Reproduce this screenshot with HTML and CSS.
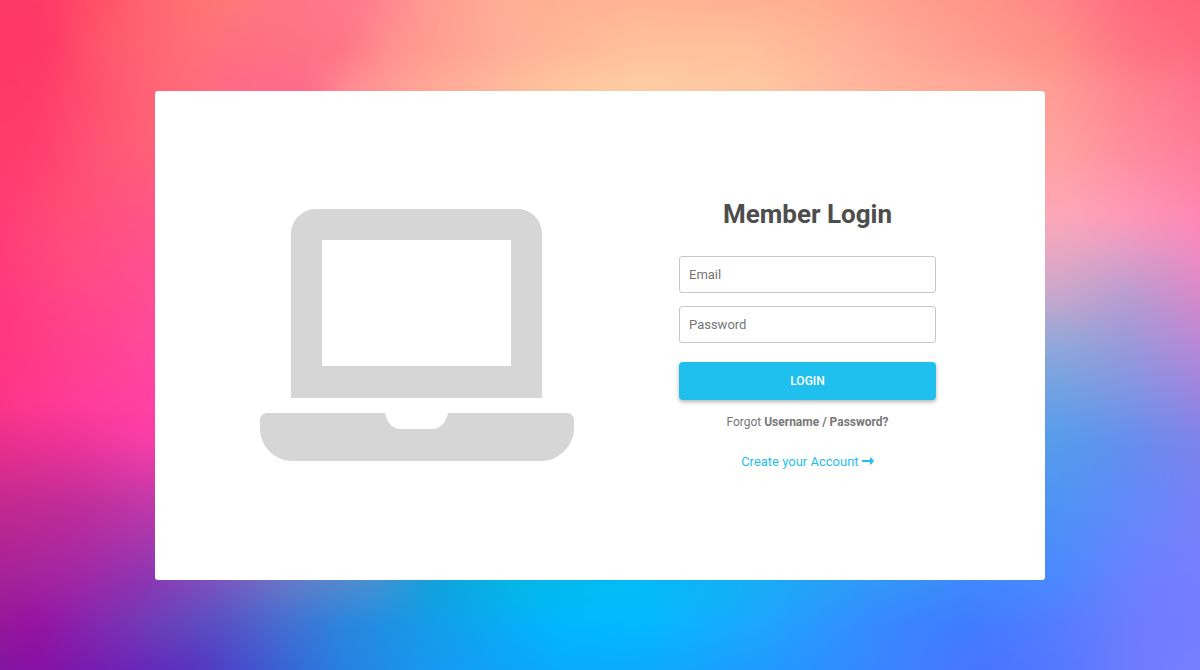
FILE: index.html
```html
<!DOCTYPE html>
<html lang="en">
<head>
<meta charset="utf-8">
<meta name="viewport" content="width=device-width, initial-scale=1">
<title>Member Login</title>
<link rel="stylesheet" href="styles.css">
</head>
<body>
<div class="backdrop" aria-hidden="true">
  <div class="band band-1"></div>
  <div class="band band-2"></div>
  <div class="band band-3"></div>
  <div class="band band-4"></div>
  <div class="band band-5"></div>
  <div class="band band-6"></div>
  <div class="band band-7"></div>
  <div class="band band-8"></div>
  <div class="band band-9"></div>
  <div class="band band-10"></div>
  <div class="band band-11"></div>
  <div class="band band-12"></div>
  <div class="band band-13"></div>
  <div class="band band-14"></div>
</div>
<main class="card">
  <svg class="laptop" viewBox="0 0 314 252" aria-hidden="true">
    <path fill-rule="evenodd" d="M55 0H259C272 1 282 11 282 25V189H31V25C31 12 41 1 55 0ZM62 31V157H251V31Z"/>
    <path d="M8 204H125C127 213 132 220 141 220H172C181 220 186 213 188 204H306Q314 204 314 212V220C314 236 299 252 282 252H32C14 252 0 236 0 220V212Q0 204 8 204Z"/>
  </svg>
  <form class="login">
    <h1 class="title">Member Login</h1>
    <div class="fields">
      <input class="field" type="email" placeholder="Email" aria-label="Email">
      <input class="field" type="password" placeholder="Password" aria-label="Password">
    </div>
    <button class="submit" type="button">LOGIN</button>
    <p class="forgot">Forgot <a class="forgot-link" href="#">Username / Password?</a></p>
    <a class="create" href="#">Create your Account
      <svg class="arrow" viewBox="0 0 12 9" aria-hidden="true"><path d="M0 3H8V1Q8 0 9 .6L12 4 9 7.400Q8 8 8 7V5H0Z"/></svg></a>
  </form>
</main>
</body>
</html>
```
FILE: styles.css
```css
* { box-sizing: border-box; }
body {
  margin: 0;
  min-height: 100vh;
  padding: 24px 0;
  display: flex;
  align-items: center;
  justify-content: center;
  font-family: Roboto, "Liberation Sans", sans-serif;
  color: #777;
}
/* Mesh background: each band is a row of colours faded in over the one above. */
.backdrop {
  position: fixed;
  inset: -16px;
  z-index: -1;
  display: grid;
  filter: blur(6px);
}
.band {
  grid-area: 1 / 1;
  -webkit-mask-image: linear-gradient(transparent var(--from), #000 var(--to));
  mask-image: linear-gradient(transparent var(--from), #000 var(--to));
}
.band-1 {
  -webkit-mask-image: none;
  mask-image: none;
  background: linear-gradient(90deg, #ff3868, #ff3a66 5%, #ff5468 10%, #ff6470 13%, #ff7876 19%, #ff7488 25%, #ff7c90 31%, #ff9a92 36%, #ffae94 42%, #ffb494 53%, #ffae92 67%, #ff9688 80%, #ff8688 87%, #ff6c80 93%, #ff6078);
}
.band-2 {
  --from: 2%; --to: 9%;
  background: linear-gradient(90deg, #ff3868, #ff3868 5%, #ff5a6c 10%, #ff6472 13%, #ff7078 17%, #ff7082 22%, #ff7488 29%, #ff928e 33%, #ffae98 42%, #ffc09a 53%, #ffc09c 62%, #ffae98 72%, #ff9c92 80%, #ff9088 87%, #ff7484 93%, #ff6880);
}
.band-3 {
  --from: 9%; --to: 15%;
  background: linear-gradient(90deg, #ff3868, #ff3a68 4%, #ff4c6c 8%, #ff6274 13%, #ff6c7c 17%, #ff6a88 20%, #ff6c8a 26%, #ff9094 30%, #ffac98 37%, #fec89e 47%, #fdcea4 53%, #fec8a2 63%, #ffb49c 72%, #ffa698 83%, #ff9c94 87%, #ff8490 93%, #ff708e);
}
.band-4 {
  --from: 15%; --to: 23%;
  background: linear-gradient(90deg, #ff3a6a, #ff4070 5%, #ff5474 9%, #ff6078 13%, #ffa29e 87%, #ff8c9c 93%, #ff7a98);
}
.band-5 {
  --from: 23%; --to: 33%;
  background: linear-gradient(90deg, #ff3872, #ff4e78 7%, #ff5486 13%, #fda8b8 87%, #ff98b8 93%, #ff84b2);
}
.band-6 {
  --from: 33%; --to: 39%;
  background: linear-gradient(90deg, #ff3878, #ff4c80 7%, #ff508e 13%, #e4a8c4 87%, #dca0c8 92%, #e094c6 96%, #f686c4);
}
.band-7 {
  --from: 39%; --to: 45%;
  background: linear-gradient(90deg, #ff347c, #ff4686 7%, #ff4c94 13%, #c4a8cc 87%, #b49cd2 93%, #dc84c8);
}
.band-8 {
  --from: 45%; --to: 52%;
  background: linear-gradient(90deg, #ff3480, #ff3c88 5%, #ff489c 13%, #8ca8da 87%, #9898da 93%, #bc84d8);
}
.band-9 {
  --from: 52%; --to: 60%;
  background: linear-gradient(90deg, #fc3486, #ff3c9a 8%, #ff40a2 13%, #68a0e6 87%, #7894e6 93%, #9a80e2);
}
.band-10 {
  --from: 60%; --to: 65%;
  background: linear-gradient(90deg, #ea2e8a, #ee3498 7%, #f83ea6 13%, #569cec 87%, #648eee 93%, #8480ea);
}
.band-11 {
  --from: 65%; --to: 74%;
  background: linear-gradient(90deg, #c4288c, #c02c98 7%, #c038a8 13%, #4e94f4 87%, #628afa 93%, #7c7ef6);
}
.band-12 {
  --from: 74%; --to: 85%;
  background: linear-gradient(90deg, #a42094, #a026a4 7%, #8c34b2 13%, #7c50be 18%, #647cc8 25%, #4a90d0 31%, #0ca4dc 37%, #04b8e6 43%, #00bef6 52%, #14b0f4 62%, #3098f8 72%, #4088fa 80%, #4a88ff 87%, #6a80ff 93%, #7a7cff);
}
.band-13 {
  --from: 85%; --to: 91%;
  background: linear-gradient(90deg, #981a98, #9612a0 4%, #8428b0 9%, #6c40b8 14%, #5a50c4 19%, #486cd0 24%, #2c84de 29%, #149ce8 36%, #00b8fe 47%, #02baff 53%, #1ea6ff 63%, #3888ff 73%, #407cff 80%, #547cff 87%, #6c7cff 93%, #787cff);
}
.band-14 {
  --from: 91%; --to: 98%;
  background: linear-gradient(90deg, #7c189c, #8610a4 4%, #6a24b8 12%, #5632c0 17%, #3468d8 25%, #2880e0 29%, #1898f0 36%, #08aaff 47%, #0ea8ff 55%, #2496ff 65%, #4080ff 75%, #4874ff 81%, #5478ff 87%, #6c7cff 93%, #7a80ff);
}
.card {
  width: 75%;
  max-width: 890px;
  padding: 105px 109px 106px 105px;
  display: flex;
  flex-wrap: wrap;
  gap: 32px;
  align-items: center;
  justify-content: space-between;
  background: #fff;
  border-radius: 3px;
}
.laptop {
  width: 314px;
  max-width: 100%;
  fill: #d6d6d6;
}
.login {
  width: 257px;
  display: flex;
  flex-direction: column;
  text-align: center;
}
.title {
  margin: 0 0 24px;
  font-size: 26px;
  line-height: 36px;
  font-weight: 700;
  color: #4d4d4d;
}
.fields {
  display: grid;
  gap: 13px;
  margin-bottom: 19px;
}
.field {
  width: 100%;
  height: 37px;
  padding: 0 9px;
  border: 1px solid #c8c8c8;
  border-radius: 3px;
  background: #fff;
  font: 13px/20px Roboto, "Liberation Sans", sans-serif;
  color: #444;
}
.field::placeholder { color: #757575; }
.submit {
  height: 38px;
  margin-bottom: 12px;
  border: 0;
  border-radius: 4px;
  background: #1fc0ee;
  box-shadow: 0 2px 4px rgba(0, 0, 0, 0.3);
  font: 500 12px/20px Roboto, "Liberation Sans", sans-serif;
  color: #fff;
}
.forgot {
  margin: 0 0 17px;
  font-size: 12px;
  line-height: 20px;
}
.forgot-link {
  font-weight: 700;
  color: inherit;
  text-decoration: none;
}
.create {
  font-size: 13px;
  line-height: 25px;
  color: #1fc0ee;
  text-decoration: none;
}
.arrow {
  width: 12px;
  height: 9px;
  fill: currentColor;
}
```
